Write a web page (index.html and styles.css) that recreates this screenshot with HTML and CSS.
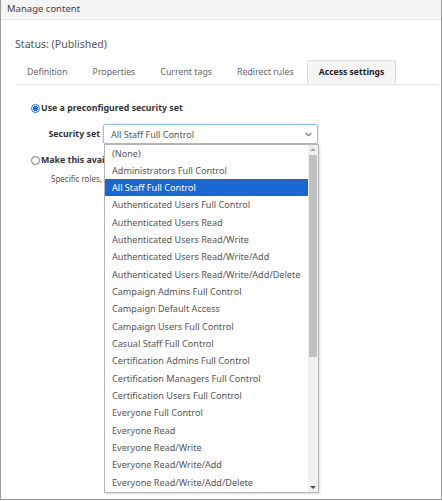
FILE: index.html
```html
<!DOCTYPE html>
<html>
<head>
<meta charset="utf-8">
<link rel="stylesheet" href="styles.css">
</head>
<body>
<div class="panel">
  <div class="panel-header">Manage content</div>
  <div class="panel-body">
    <div class="status">Status: (Published)</div>
    <div class="tabs">
      <div class="tab">Definition</div>
      <div class="tab">Properties</div>
      <div class="tab">Current tags</div>
      <div class="tab">Redirect rules</div>
      <div class="tab active">Access settings</div>
    </div>
    <div class="access">
      <div class="radio-row">
        <span class="radio checked"></span>
        <span class="radio-label">Use a preconfigured security set</span>
      </div>
      <div class="field-row">
        <span class="field-label">Security set</span>
        <div class="select">
          <span>All Staff Full Control</span>
          <svg class="chev" width="7" height="5" viewBox="0 0 7 5"><path d="M0.8 1 L3.5 3.7 L6.2 1" fill="none" stroke="#777" stroke-width="1.1"/></svg>
        </div>
      </div>
      <div class="radio-row second">
        <span class="radio"></span>
        <span class="radio-label">Make this available to specific roles</span>
      </div>
      <div class="hint">Specific roles, users and groups</div>
    </div>
  </div>
  <div class="dropdown">
    <ul class="options">
      <li>(None)</li>
      <li>Administrators Full Control</li>
      <li class="selected">All Staff Full Control</li>
      <li>Authenticated Users Full Control</li>
      <li>Authenticated Users Read</li>
      <li>Authenticated Users Read/Write</li>
      <li>Authenticated Users Read/Write/Add</li>
      <li>Authenticated Users Read/Write/Add/Delete</li>
      <li>Campaign Admins Full Control</li>
      <li>Campaign Default Access</li>
      <li>Campaign Users Full Control</li>
      <li>Casual Staff Full Control</li>
      <li>Certification Admins Full Control</li>
      <li>Certification Managers Full Control</li>
      <li>Certification Users Full Control</li>
      <li>Everyone Full Control</li>
      <li>Everyone Read</li>
      <li>Everyone Read/Write</li>
      <li>Everyone Read/Write/Add</li>
      <li>Everyone Read/Write/Add/Delete</li>
    </ul>
    <div class="scrollbar">
      <div class="arrow up"></div>
      <div class="thumb"></div>
      <div class="track"></div>
      <div class="arrow down"></div>
    </div>
  </div>
</div>
</body>
</html>
```

FILE: styles.css
```css
* { box-sizing: border-box; }
html, body { margin: 0; padding: 0; background: #fff; }
body { font-family: "Noto Sans", "Open Sans", sans-serif; color: #444; }

.panel {
  position: relative;
  width: 442px;
  height: 500px;
  border: 1px solid #9a9a9a;
  border-top: none;
  overflow: hidden;
}
.panel-header {
  height: 20px;
  background: #f5f5f5;
  border-bottom: 1px solid #e6e6e6;
  padding: 1px 0 0 6px;
  font-size: 9.5px;
  line-height: 15px;
  color: #444;
}
.panel-body { padding: 0 3px 0 14px; }
.status {
  margin-top: 15px;
  font-size: 10.6px;
  line-height: 18px;
  color: #555;
}
.tabs {
  display: flex;
  margin-top: 7px;
  border-bottom: 1px solid #e3e3e3;
  height: 25px;
}
.tab {
  padding: 0 11px;
  font-size: 8.8px;
  line-height: 23px;
  color: #666;
  border: 1px solid transparent;
  border-bottom: none;
  margin-right: 1px;
  white-space: nowrap;
}
.tab.active {
  background: #f5f5f5;
  border-color: #dedede;
  border-radius: 2px 2px 0 0;
  color: #222;
  font-weight: 700;
  font-size: 8.6px;
}
.access { padding-left: 16px; }
.radio-row {
  display: flex;
  align-items: center;
  height: 16px;
  margin-top: 15px;
}
.radio-row.second { margin-top: 8px; }
.radio {
  width: 9px;
  height: 9px;
  border-radius: 50%;
  border: 1px solid #777;
  background: #fff;
  margin-right: 1px;
  flex: none;
}
.radio.checked {
  border-color: #1a73e8;
  background: radial-gradient(circle, #1a73e8 0 2.3px, #fff 2.6px);
}
.radio-label {
  font-size: 8.8px;
  font-weight: 700;
  color: #333;
  white-space: nowrap;
}
.field-row {
  display: flex;
  align-items: center;
  margin-top: 8px;
  padding-left: 2px;
}
.field-label {
  width: 70px;
  text-align: right;
  padding-right: 3px;
  font-size: 8.8px;
  font-weight: 700;
  color: #333;
}
.select {
  width: 215px;
  height: 20px;
  border: 1px solid #8fbff2;
  border-radius: 2px;
  box-shadow: 0 0 2px rgba(80,150,230,0.45);
  display: flex;
  align-items: center;
  justify-content: space-between;
  padding: 0 5px 0 7px;
  font-size: 9px;
  color: #555;
}
.chev { margin-top: 1px; }
.hint {
  margin-top: 5px;
  padding-left: 20px;
  font-size: 8px;
  color: #555;
  white-space: nowrap;
}

.dropdown {
  position: absolute;
  left: 103px;
  top: 144px;
  width: 215px;
  height: 349px;
  border: 1px solid #b5b5b5;
  background: #fff;
  box-shadow: 1px 1px 2px rgba(0,0,0,0.15);
  display: flex;
}
.options {
  list-style: none;
  margin: -0.5px 0 0;
  padding: 0;
  flex: 1;
  overflow: hidden;
}
.options li {
  height: 17.33px;
  line-height: 17.33px;
  padding-left: 7px;
  font-size: 9.1px;
  color: #555;
  white-space: nowrap;
}
.options li.selected { background: #1967d2; color: #fff; }
.scrollbar {
  width: 10px;
  background: #f0f0f0;
  display: flex;
  flex-direction: column;
}
.arrow { height: 10px; position: relative; }
.arrow::after {
  content: "";
  position: absolute;
  left: 2px;
  border-left: 3px solid transparent;
  border-right: 3px solid transparent;
}
.arrow.up::after { top: 3px; border-bottom: 3px solid #a0a0a0; }
.arrow.down::after { top: 4px; border-top: 3px solid #505050; }
.thumb { height: 202px; background: #c1c1c1; margin: 0 1px; }
.track { flex: 1; }
```
